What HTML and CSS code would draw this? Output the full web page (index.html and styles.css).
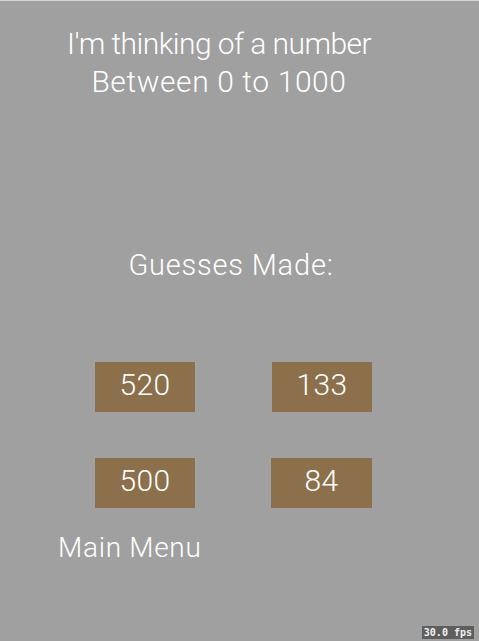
FILE: index.html
```html
<!DOCTYPE html>
<html>
<head>
<meta charset="utf-8">
<link rel="stylesheet" href="styles.css">
</head>
<body>
<div class="screen">
  <div class="title">
    <div class="line-a">I'm thinking of a number</div>
    <div class="line-b">Between 0 to 1000</div>
  </div>
  <div class="guesses-label">Guesses Made:</div>
  <div class="grid">
    <div class="guess">520</div>
    <div class="guess">133</div>
    <div class="guess">500</div>
    <div class="guess shift">84</div>
  </div>
  <div class="menu">Main Menu</div>
  <div class="fps">30.0 fps</div>
</div>
</body>
</html>
```
FILE: styles.css
```css
html, body {
  margin: 0;
  padding: 0;
}
body {
  background: #a0a0a0;
}
.screen {
  position: relative;
  width: 479px;
  height: 641px;
  box-sizing: border-box;
  border-top: 1px solid #d4d4d4;
  background: #a0a0a0;
  color: #ffffff;
  font-family: Roboto, Lato, "Liberation Sans", sans-serif;
  font-weight: 300;
  display: flex;
  flex-direction: column;
  overflow: hidden;
}
.title {
  margin-top: 24px;
  padding-right: 41px;
  text-align: center;
  font-size: 30px;
  line-height: 38px;
}
.line-a {
  letter-spacing: -0.55px;
}
.line-b {
  letter-spacing: 0.6px;
}
.guesses-label {
  margin-top: 146px;
  padding-right: 17px;
  text-align: center;
  font-size: 29px;
  line-height: 36px;
  letter-spacing: 0.8px;
}
.grid {
  margin-top: 79px;
  margin-left: 95px;
  display: grid;
  grid-template-columns: 100px 100px;
  column-gap: 77px;
  row-gap: 46px;
}
.guess {
  background: #8c704b;
  height: 50px;
  display: flex;
  align-items: center;
  justify-content: center;
  font-size: 30px;
  padding-bottom: 5px;
  box-sizing: border-box;
  letter-spacing: 0.3px;
}
.shift {
  margin-left: -1px;
}
.menu {
  margin-top: 22px;
  margin-left: 58px;
  font-size: 28px;
  line-height: 36px;
  letter-spacing: 0.7px;
}
.fps {
  position: absolute;
  right: 5px;
  bottom: 2px;
  background: #5e5e5e;
  color: #f2f2f2;
  font-family: "DejaVu Sans Mono", monospace;
  font-weight: bold;
  font-size: 10px;
  line-height: 13px;
  padding: 0 2px;
}
```
